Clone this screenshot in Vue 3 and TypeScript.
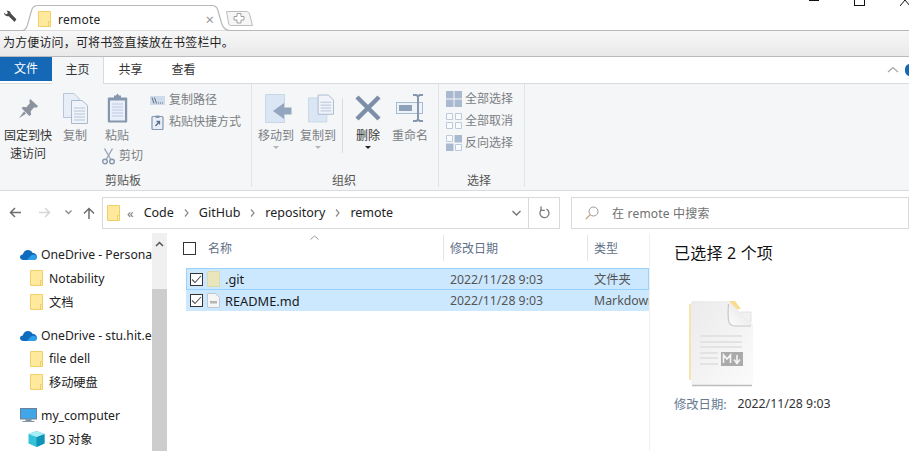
<template>
  <div class="window">
    <!-- 浏览器标签栏 -->
    <div class="tabstrip">
      <svg class="wrench" width="14" height="13" viewBox="0 0 14 13">
        <path d="M1 2.500 3 4.500 5 3 3.600.8C5.600.2 7.600 1.200 7.800 3.400L13.400 9.200 11.600 12 5.800 6.200C3.600 6.600.8 5 1 2.500Z" fill="#4a4a4a" />
      </svg>
      <div class="tab">
        <svg class="tab-shape" width="208" height="27" viewBox="0 0 208 27">
          <path d="M.5 26.500C3 26.500 4.500 24 5.500 21L9.500 6.500C10.500 3 13 1.500 16 1.500H190C193 1.500 195 3 196 6.500L199.500 19C201 24 203 26 207.500 26.500" fill="#fff" stroke="#b9b9b9" stroke-width="1.200" />
        </svg>
        <svg class="folder tab-folder" width="13" height="16" viewBox="0 0 13 16">
          <path d="M.5.500H12.500V15.500H.5Z" fill="#ffe99c" stroke="#f0cf6a" />
          <path d="M12.500 10.500H10.500V15.500" fill="none" stroke="#f0cf6a" />
        </svg>
        <span class="tab-title">remote</span>
        <span class="tab-close">×</span>
      </div>
      <svg class="newtab" width="27" height="16" viewBox="0 0 27 16">
        <path d="M.5 1.500H20C22 1.500 23 2.500 23.500 4L26.500 15.500H4.500C3.500 15.500 3 15 2.800 14.200Z" fill="#f6f6f6" stroke="#bdbdbd" />
        <path d="M11 3.500H15V6.500H18V10H15V13H11V10H8V6.500H11Z" fill="#fff" stroke="#a0a0a0" />
      </svg>
      <div class="winctl">
        <i class="win-min"></i>
        <i class="win-max"></i>
        <svg class="win-close" width="10" height="6" viewBox="0 0 10 6"><path d="M0 6 5 0 10 6" fill="none" stroke="#111" /></svg>
      </div>
    </div>

    <div class="bookmarkbar">为方便访问，可将书签直接放在书签栏中。</div>

    <!-- 功能区标签 -->
    <div class="ribbon-tabs">
      <div class="rtab file">文件</div>
      <div class="rtab active">主页</div>
      <div class="rtab">共享</div>
      <div class="rtab">查看</div>
      <div class="rtab-right">
        <svg width="12" height="7" viewBox="0 0 12 7"><path d="M1 6 6 1.500 11 6" fill="none" stroke="#a8a8a8" stroke-width="1.300" /></svg>
        <i class="help"></i>
      </div>
    </div>

    <!-- 功能区 -->
    <div class="ribbon">
      <section class="group g-clip">
        <div class="group-body">
          <div class="big b-pin">
            <div class="big-icon">
              <svg width="21" height="21" viewBox="0 0 24 24">
                <path d="M14 1 23 9.500 20.500 11 18.500 10.500 14.500 15 15 19 13 20.500 4 11.500 6 10 9.500 10.500 13.500 6 13 3Z" fill="#8a939e" />
                <path d="M7 15 1 23 9 18Z" fill="#8a939e" />
              </svg>
            </div>
            <span class="lbl dark">固定到快<br />速访问</span>
          </div>
          <div class="big b-copy">
            <div class="big-icon">
              <svg width="25" height="31" viewBox="0 0 25 31">
                <path d="M.5.500H11L16 5.500V24.500H.5Z" fill="#e8eef7" stroke="#b9c6d9" />
                <path d="M8.500 7.500H19L24.500 12.500V30.500H8.500Z" fill="#f0f4fa" stroke="#a9b9d0" />
                <path d="M11 15H22M11 18H22M11 21H22M11 24H22M11 27H22" stroke="#b4c2d6" />
              </svg>
            </div>
            <span class="lbl">复制</span>
          </div>
          <div class="big-col">
            <div class="big b-paste">
              <div class="big-icon">
                <svg width="21" height="30" viewBox="0 0 21 30">
                  <rect x=".8" y="4.500" width="19.400" height="25" rx="1" fill="#8596ad" />
                  <rect x="3" y="7.500" width="15" height="20" fill="#e9effa" />
                  <path d="M5 11H16M5 14H16M5 17H16M5 20H16M5 23H16" stroke="#bccadf" />
                  <path d="M7 4.500V2.500H9L10.500.5 12 2.500H14V6.500H7Z" fill="#8596ad" />
                </svg>
              </div>
              <span class="lbl">粘贴</span>
            </div>
            <div class="small s-cut">
              <svg width="13" height="17" viewBox="0 0 13 17">
                <path d="M2.500.500 8.500 11M10.500.500 4.500 11" stroke="#9da9ba" stroke-width="1.500" fill="none" />
                <circle cx="3" cy="13.500" r="2.300" fill="none" stroke="#8596ad" stroke-width="1.400" />
                <circle cx="10" cy="13.500" r="2.300" fill="none" stroke="#8596ad" stroke-width="1.400" />
              </svg>
              <span class="lbl">剪切</span>
            </div>
          </div>
          <div class="small-col">
            <div class="small">
              <svg width="15" height="9" viewBox="0 0 15 9">
                <rect width="15" height="9" fill="#cfdbea" />
                <path d="M2 1.500 4 7.500M4.500 1.500 6.500 7.500" stroke="#5c6f88" />
                <path d="M8 7H9M10 7H11M12 7H13" stroke="#5c6f88" />
              </svg>
              <span class="lbl">复制路径</span>
            </div>
            <div class="small">
              <svg width="15" height="15" viewBox="-1.500 0 15 15">
                <rect x=".5" y="1.500" width="11" height="13" rx="1" fill="#e9effa" stroke="#8596ad" stroke-width="1.200" />
                <path d="M4 .5H8V3H4Z" fill="#8596ad" />
                <path d="M4 11 8 6.500M5 6.500H8V9.500" stroke="#5c6f88" stroke-width="1.300" fill="none" />
              </svg>
              <span class="lbl">粘贴快捷方式</span>
            </div>
          </div>
        </div>
        <div class="group-name">剪贴板</div>
      </section>

      <section class="group g-org">
        <div class="group-body">
          <div class="big b-w42">
            <div class="big-icon shifted">
              <svg width="27" height="29" viewBox="0 0 27 29">
                <path d="M.5.500H19.500V28.500H.5Z" fill="#dbe6f4" stroke="#c8d6e8" />
                <path d="M19 9 8 17 19 25V20.500H26.500V13.500H19Z" fill="#93a5bf" />
              </svg>
            </div>
            <span class="lbl">移动到</span>
            <i class="caret"></i>
          </div>
          <div class="big b-w42">
            <div class="big-icon shifted">
              <svg width="26" height="29" viewBox="0 0 27 29">
                <path d="M.5 3.500H19.500V28.500H.5Z" fill="#dbe6f4" stroke="#c8d6e8" />
                <path d="M10.500.5H21L26.500 5.500V20.500H10.500Z" fill="#f0f4fa" stroke="#a9b9d0" />
                <path d="M13 8H24M13 11H24M13 14H24M13 17H24" stroke="#b4c2d6" />
              </svg>
            </div>
            <span class="lbl">复制到</span>
            <i class="caret"></i>
          </div>
          <div class="vsep"></div>
          <div class="big b-w42">
            <div class="big-icon">
              <svg width="26" height="26" viewBox="0 0 26 26">
                <path d="M2 2 24 24M24 2 2 24" stroke="#7d8ea8" stroke-width="4.500" />
              </svg>
            </div>
            <span class="lbl dark">删除</span>
            <i class="caret dark-caret"></i>
          </div>
          <div class="big b-w42">
            <div class="big-icon">
              <svg width="28" height="28" viewBox="0 0 28 28">
                <rect x=".5" y="8.500" width="26" height="11" fill="#eef3fa" stroke="#a9b9d0" />
                <rect x="3" y="11" width="13" height="6" fill="#8ea1bb" />
                <path d="M17 1H20.500L22 2.500 23.500 1H27M22 2.500V25.500M17 27H20.500L22 25.500 23.500 27H27" fill="none" stroke="#8596ad" stroke-width="2" />
              </svg>
            </div>
            <span class="lbl">重命名</span>
          </div>
        </div>
        <div class="group-name">组织</div>
      </section>

      <section class="group g-sel">
        <div class="sel-col">
          <div class="small">
            <svg width="16" height="16" viewBox="0 0 16 16">
              <path d="M0 0H7.500V7.500H0ZM8.500 0H16V7.500H8.500ZM0 8.500H7.500V16H0ZM8.500 8.500H16V16H8.500Z" fill="#a9b9d0" />
            </svg>
            <span class="lbl">全部选择</span>
          </div>
          <div class="small">
            <svg width="16" height="16" viewBox="0 0 16 16">
              <path d="M.5.500H6.500V6.500H.5ZM9.500.5H15.500V6.500H9.500ZM.5 9.500H6.500V15.500H.5ZM9.500 9.500H15.500V15.500H9.500Z" fill="#f8fafc" stroke="#bccadb" />
            </svg>
            <span class="lbl">全部取消</span>
          </div>
          <div class="small">
            <svg width="16" height="16" viewBox="0 0 16 16">
              <path d="M.5.500H6.500V6.500H.5ZM9.500 9.500H15.500V15.500H9.500Z" fill="#f8fafc" stroke="#bccadb" />
              <path d="M8.500 0H16V7.500H8.500ZM0 8.500H7.500V16H0Z" fill="#a9b9d0" />
            </svg>
            <span class="lbl">反向选择</span>
          </div>
        </div>
        <div class="group-name">选择</div>
      </section>
    </div>

    <!-- 地址栏 -->
    <div class="addressrow">
      <div class="navbtns">
        <svg width="12" height="11" viewBox="0 0 12 11"><path d="M12 5.500H1.500M6 1 1.500 5.500 6 10" fill="none" stroke="#6e6e6e" stroke-width="1.500" /></svg>
        <svg class="nb-fwd" width="12" height="11" viewBox="0 0 12 11"><path d="M0 5.500H10.500M6 1 10.500 5.500 6 10" fill="none" stroke="#d6d6d6" stroke-width="1.500" /></svg>
        <svg class="nb-down" width="7" height="5" viewBox="0 0 7 5"><path d="M.5.500 3.500 3.500 6.500.5" fill="none" stroke="#8a8a8a" stroke-width="1.300" /></svg>
        <svg class="nb-up" width="12" height="12" viewBox="0 0 12 12"><path d="M6 12V1.500M1 6.500 6 1.500 11 6.500" fill="none" stroke="#6e6e6e" stroke-width="1.500" /></svg>
      </div>
      <div class="addressbox">
        <svg class="folder" width="13" height="16" viewBox="0 0 13 16">
          <path d="M.5.500H12.500V15.500H.5Z" fill="#ffe99c" stroke="#f0cf6a" />
          <path d="M12.500 10.500H10.500V15.500" fill="none" stroke="#f0cf6a" />
        </svg>
        <span class="crumb-more">«</span>
        <template v-for="(c, i) in crumbs" :key="c">
          <span class="crumb">{{ c }}</span>
          <svg v-if="i < crumbs.length - 1" width="5" height="8" viewBox="0 0 5 8"><path d="M1 .5 4 4 1 7.500" fill="none" stroke="#8a8a8a" stroke-width="1.200" /></svg>
        </template>
        <div class="addr-end">
          <svg width="9" height="6" viewBox="0 0 9 6"><path d="M.5 1 4.500 5 8.500 1" fill="none" stroke="#7a7a7a" stroke-width="1.500" /></svg>
        </div>
        <div class="addr-refresh">
          <svg width="11" height="13" viewBox="0 0 11 13"><path d="M7.500 3.200A4.500 4.500 0 1 1 2.500 3.800M2 .5V4.300H5.800" fill="none" stroke="#7a7a7a" stroke-width="1.300" /></svg>
        </div>
      </div>
      <div class="searchbox">
        <svg width="14" height="14" viewBox="0 0 14 14"><circle cx="8.500" cy="5.500" r="4.500" fill="none" stroke="#9a9a9a" /><path d="M5.300 8.700.8 13.200" stroke="#c79a6a" stroke-width="1.200" /></svg>
        <span>在 remote 中搜索</span>
      </div>
    </div>

    <!-- 主区域 -->
    <div class="main">
      <nav class="sidebar">
        <div v-for="item in navItems" :key="item.label" class="nav-row" :class="[item.kind, { spaced: item.spaced }]">
          <svg v-if="item.kind === 'cloud'" width="17" height="11" viewBox="0 0 17 11">
            <path d="M3.500 11C1.500 11 0 9.800 0 8.200 0 6.600 1.300 5.500 2.800 5.500 3.300 3 5.400 1 8 1 10 1 11.500 2 12.400 3.700 14.800 3.800 17 5.500 17 7.800 17 9.700 15.500 11 13.500 11Z" fill="#0f6cbd" />
            <path d="M7 11 11 6.500C12.800 4.700 17 6 17 8.500 17 10 15.500 11 13.800 11Z" fill="#2c9fe8" />
          </svg>
          <svg v-else-if="item.kind === 'folder'" width="13" height="16" viewBox="0 0 13 16">
            <path d="M.5.500H12.500V15.500H.5Z" fill="#ffe99c" stroke="#f0cf6a" />
            <path d="M12.500 10.500H10.500V15.500" fill="none" stroke="#f0cf6a" />
          </svg>
          <svg v-else-if="item.kind === 'pc'" width="17" height="15" viewBox="0 0 17 15">
            <rect x=".5" y=".5" width="16" height="10.500" fill="#3fa6e8" stroke="#6b8296" />
            <path d="M6 11H11V13H6ZM2.500 13.500H14.500" stroke="#8195a7" fill="#8195a7" />
          </svg>
          <svg v-else width="17" height="16" viewBox="0 0 17 16">
            <path d="M8.500 0 16.500 3V12.500L8.500 16 .5 12.500V3Z" fill="#35c1d8" />
            <path d="M8.500 6 16.500 3V12.500L8.500 16Z" fill="#0f93b8" />
            <path d="M8.500 0 16.500 3 8.500 6 .5 3Z" fill="#a9eef5" />
          </svg>
          <span>{{ item.label }}</span>
        </div>
      </nav>
      <div class="scrollbar">
        <svg width="9" height="6" viewBox="0 0 9 6"><path d="M1 5 4.500 1.500 8 5" fill="none" stroke="#555" stroke-width="1.500" /></svg>
        <div class="thumb"></div>
      </div>

      <div class="filelist">
        <div class="list-head">
          <svg class="sort" width="9" height="5" viewBox="0 0 9 5"><path d="M.5 4.500 4.500 1 8.500 4.500" fill="none" stroke="#9a9a9a" /></svg>
          <i class="check head-check"></i>
          <span class="col-name">名称</span>
          <span class="col col-date">修改日期</span>
          <span class="col col-type">类型</span>
        </div>
        <div v-for="f in files" :key="f.name" class="file-row" :class="{ focused: f.focused }">
          <i class="check on">
            <svg width="11" height="9" viewBox="0 0 11 9"><path d="M1 4.500 4 7.500 10 1" fill="none" stroke="#555" stroke-width="1.100" /></svg>
          </i>
          <svg v-if="f.focused" class="file-ic" width="13" height="16" viewBox="0 0 13 16">
            <path d="M.5.500H12.500V15.500H.5Z" fill="#e9e6bd" stroke="#dcd9ac" />
          </svg>
          <svg v-else class="file-ic" width="13" height="15" viewBox="0 0 13 15">
            <path d="M.5.500H8.500L12.500 4.500V14.500H.5Z" fill="#f5f5f5" stroke="#bfc6d0" />
            <path d="M3 8H10V10.500H3Z" fill="#b5b5b5" />
          </svg>
          <span class="f-name">{{ f.name }}</span>
          <span class="f-date">{{ f.date }}</span>
          <span class="f-type">{{ f.type }}</span>
        </div>
      </div>

      <aside class="preview">
        <div class="pv-title">已选择 2 个项</div>
        <svg class="pv-icon" width="66" height="87" viewBox="0 0 66 87">
          <defs>
            <linearGradient id="pg" x1="0" y1="0" x2="1" y2="1">
              <stop offset="0" stop-color="#ebebeb" />
              <stop offset="1" stop-color="#fbfbfb" />
            </linearGradient>
            <linearGradient id="pf" x1="0" y1="1" x2="1" y2="0">
              <stop offset="0" stop-color="#fdfdfd" />
              <stop offset="1" stop-color="#dedede" />
            </linearGradient>
          </defs>
          <path d="M0 4H4V80H0Z" fill="#f6e3b0" />
          <path d="M2 3C2 2 3 1 4 1H41L64 25V83C64 84 63 85 62 85H4C3 85 2 84 2 83Z" fill="url(#pg)" />
          <path d="M41 1H46L52 9H41Z" fill="#f9dc8e" />
          <path d="M52 12H62V22H52Z" fill="#f1f1f1" stroke="#e2e2e2" />
          <path d="M3 85.500H63" stroke="#bcbcbc" stroke-width="1.500" />
          <path d="M40 1C39.500 10 39.500 16 40 20 40.500 23.500 42 25 46 25H64Z" fill="url(#pf)" />
          <path d="M39.500 4C39 10 39 16 39.500 20 40 24.500 42 26 46 26H62" fill="none" stroke="#c8c8c8" stroke-width="1.200" />
          <path d="M11 36H53M11 42H53M11 47H53M11 53H29M11 58H29M11 64H29" stroke="#e3e3e3" stroke-width="2" />
          <rect x="32" y="52" width="22" height="14" fill="#aaaaaa" />
          <path d="M34.500 63V55L38 59 41.500 55V63M48 55V62.500M45 59.500 48 63.500 51 59.500" fill="none" stroke="#f5f5f5" stroke-width="1.600" />
        </svg>
        <div class="pv-meta"><span class="pv-key">修改日期:</span><span>2022/11/28 9:03</span></div>
      </aside>
    </div>
  </div>
</template>

<script setup lang="ts">
interface NavItem {
  label: string
  kind: 'cloud' | 'folder' | 'pc' | 'cube'
  spaced?: boolean
}

interface FileRow {
  name: string
  date: string
  type: string
  focused: boolean
}

const crumbs = ['Code', 'GitHub', 'repository', 'remote']

const navItems: NavItem[] = [
  { label: 'OneDrive - Personal', kind: 'cloud' },
  { label: 'Notability', kind: 'folder' },
  { label: '文档', kind: 'folder' },
  { label: 'OneDrive - stu.hit.edu.cn', kind: 'cloud', spaced: true },
  { label: 'file dell', kind: 'folder' },
  { label: '移动硬盘', kind: 'folder' },
  { label: 'my_computer', kind: 'pc', spaced: true },
  { label: '3D 对象', kind: 'cube' },
]

const files: FileRow[] = [
  { name: '.git', date: '2022/11/28 9:03', type: '文件夹', focused: true },
  { name: 'README.md', date: '2022/11/28 9:03', type: 'Markdown File', focused: false },
]
</script>

<style>
html,
body {
  margin: 0;
  background: #fff;
  overflow: hidden;
}
</style>

<style scoped>
.window {
  width: 909px;
  height: 451px;
  overflow: hidden;
  display: flex;
  flex-direction: column;
  font-family: "Noto Sans", "Noto Sans CJK SC", sans-serif;
  font-size: 12px;
  color: #1a1a1a;
  background: #fff;
}

svg {
  flex: none;
  display: block;
}

/* tab strip */
.tabstrip {
  height: 31px;
  flex: none;
  display: flex;
  align-items: flex-end;
  box-sizing: border-box;
  border-bottom: 1px solid #b8b8b8;
}

.wrench {
  margin: 0 0 7px 3px;
}

.tab {
  position: relative;
  width: 208px;
  height: 27px;
  box-sizing: border-box;
  padding-top: 3px;
  margin-left: 5px;
  margin-bottom: -1px;
  display: flex;
  align-items: center;
  flex: none;
}

.tab-shape {
  position: absolute;
  left: 0;
  top: 0;
}

.tab-folder,
.tab-title,
.tab-close {
  position: relative;
}

.tab-folder {
  margin-left: 16px;
}

.tab-title {
  margin-left: 7px;
  font-size: 12px;
  color: #222;
  letter-spacing: 0.25px;
}

.tab-close {
  margin-left: auto;
  margin-right: 16px;
  font-size: 15px;
  color: #999;
  line-height: 1;
}

.newtab {
  margin: 0 0 4px -4px;
}

.winctl {
  margin-left: auto;
  align-self: flex-start;
  display: flex;
  align-items: flex-start;
}

.win-min {
  width: 10px;
  height: 1px;
  background: #111;
  margin-right: 35px;
}

.win-max {
  width: 9px;
  height: 5px;
  border: 1px solid #111;
  border-top: 0;
  margin-right: 35px;
}

.win-close {
  margin-right: -1px;
}

/* bookmark bar */
.bookmarkbar {
  height: 26px;
  flex: none;
  box-sizing: border-box;
  padding-left: 3px;
  line-height: 24px;
  font-size: 12px;
  letter-spacing: 0.15px;
  color: #222;
  background: linear-gradient(#f7f7f7, #e9e9e9);
  border-bottom: 1px solid #b9b9be;
}

/* ribbon tabs */
.ribbon-tabs {
  height: 27px;
  flex: none;
  display: flex;
  box-sizing: border-box;
  border-bottom: 1px solid #dadbdc;
}

.rtab {
  width: 53px;
  text-align: center;
  line-height: 26px;
  font-size: 12px;
  color: #333;
  box-sizing: border-box;
}

.rtab.file {
  width: 52px;
  height: 24px;
  line-height: 23px;
  background: #1568b5;
  color: #fff;
}

.rtab.active {
  width: 52px;
  height: 27px;
  background: #f5f6f7;
  border-right: 1px solid #dadbdc;
}

.rtab-right {
  margin-left: auto;
  display: flex;
  align-items: center;
  gap: 6px;
  height: 25px;
}

.help {
  width: 10px;
  height: 12px;
  border-radius: 6px;
  background: #1568b5;
  margin-right: -6px;
}

/* ribbon */
.ribbon {
  height: 107px;
  flex: none;
  box-sizing: border-box;
  display: flex;
  background: #f5f6f7;
  border-bottom: 1px solid #dadbdc;
}

.group {
  display: flex;
  flex-direction: column;
  flex: none;
  border-right: 1px solid #e2e3e4;
  box-sizing: border-box;
  padding-top: 5px;
  margin-bottom: 3px;
}

.g-clip {
  width: 252px;
}

.g-org {
  width: 187px;
  padding-left: 3px;
}

.g-sel {
  width: 86px;
  padding-left: 7px;
  padding-top: 4px;
}

.group-body {
  flex: 1;
  display: flex;
  align-items: flex-start;
}

.group-name {
  height: 16px;
  line-height: 19px;
  padding-right: 5px;
  text-align: center;
  font-size: 12px;
  color: #555;
}

.g-sel .group-name {
  padding-right: 12px;
}

.lbl {
  font-size: 12px;
  color: #7b7f85;
  line-height: 18px;
  white-space: nowrap;
}

.lbl.dark {
  color: #333;
}

.big {
  display: flex;
  flex-direction: column;
  align-items: center;
  text-align: center;
  flex: none;
}

.big-icon {
  height: 38px;
  display: flex;
  align-items: center;
  justify-content: center;
}

.big-icon.shifted {
  padding-left: 5px;
}

.b-pin {
  width: 56px;
}

.b-copy {
  width: 38px;
}

.big-col {
  width: 44px;
  margin-left: 1px;
}

.b-paste {
  width: 30px;
  margin-left: 7px;
}

.b-w42 {
  width: 42px;
}

.s-cut {
  margin-left: 7px;
}

.small {
  display: flex;
  align-items: center;
  gap: 4px;
  height: 22px;
}

.small-col {
  margin-left: 11px;
  display: flex;
  flex-direction: column;
}

.g-sel .small {
  gap: 3px;
}

.caret {
  width: 0;
  height: 0;
  border: 3px solid transparent;
  border-top: 3px solid #b5b5b5;
  margin-top: 1px;
}

.dark-caret {
  border-top-color: #222;
}

.vsep {
  width: 1px;
  height: 55px;
  background: #dcdddf;
  margin: 9px 4px 0 3px;
  flex: none;
}

.sel-col {
  flex: 1;
  display: flex;
  flex-direction: column;
}

/* address row */
.addressrow {
  height: 42px;
  flex: none;
  display: flex;
  align-items: center;
  box-sizing: border-box;
  padding-top: 1px;
}

.navbtns {
  width: 102px;
  flex: none;
  display: flex;
  align-items: center;
  padding-left: 9px;
  box-sizing: border-box;
}

.nb-fwd {
  margin-left: 18px;
}

.nb-down {
  margin-left: 14px;
}

.nb-up {
  margin-left: 11px;
}

.addressbox {
  width: 458px;
  height: 32px;
  flex: none;
  box-sizing: border-box;
  border: 1px solid #d9d9d9;
  display: flex;
  align-items: center;
  gap: 10px;
  padding-left: 4px;
  font-size: 12.500px;
  color: #222;
}

.crumb-more {
  color: #777;
  font-size: 13px;
  margin-left: -3px;
  margin-right: -1px;
  letter-spacing: 1px;
}

.addr-end {
  margin-left: auto;
  width: 24px;
  display: flex;
  justify-content: center;
}

.addr-refresh {
  width: 31px;
  height: 30px;
  margin-left: -10px;
  border-left: 1px solid #d9d9d9;
  box-sizing: border-box;
  display: flex;
  align-items: center;
  justify-content: center;
}

.searchbox {
  margin-left: 11px;
  flex: 1;
  height: 32px;
  box-sizing: border-box;
  border: 1px solid #d9d9d9;
  display: flex;
  align-items: center;
  gap: 13px;
  padding-left: 13px;
  color: #707070;
  font-size: 12px;
  letter-spacing: 0.2px;
}

/* main */
.main {
  flex: 1;
  min-height: 0;
  display: flex;
}

.sidebar {
  width: 152px;
  flex: none;
  overflow: hidden;
  padding: 10px 0 0 20px;
  box-sizing: border-box;
}

.nav-row {
  height: 23.600px;
  display: flex;
  align-items: center;
  gap: 4px;
  white-space: nowrap;
  font-size: 12.200px;
  color: #222;
}

.nav-row.folder {
  padding-left: 10px;
  gap: 6px;
}

.nav-row.cube {
  padding-left: 8px;
  gap: 4px;
}

.nav-row.spaced {
  margin-top: 9.600px;
}

.scrollbar {
  width: 15px;
  flex: none;
  background: #f0f0f0;
  display: flex;
  flex-direction: column;
  align-items: center;
  padding-top: 8px;
  box-sizing: border-box;
}

.thumb {
  width: 15px;
  flex: 1;
  margin-top: 42px;
  background: #cdcdcd;
}

.filelist {
  width: 483px;
  flex: none;
  padding-left: 3px;
  box-sizing: border-box;
  border-right: 1px solid #f0f0f0;
  overflow: hidden;
}

.list-head {
  position: relative;
  height: 35px;
  display: flex;
  align-items: flex-start;
  padding-top: 2px;
  box-sizing: border-box;
  color: #5f7088;
  font-size: 12px;
}

.sort {
  position: absolute;
  left: 140px;
  top: 2px;
}

.check {
  width: 13px;
  height: 13px;
  flex: none;
  box-sizing: border-box;
  border: 1px solid #333;
  display: flex;
  align-items: center;
  justify-content: center;
  background: #fff;
}

.head-check {
  margin-left: 13px;
  margin-top: 7px;
}

.col-name {
  margin-left: 12px;
  width: 235px;
  flex: none;
  line-height: 28px;
}

.col {
  height: 26px;
  line-height: 28px;
  border-left: 1px solid #e5e5e5;
  padding-left: 6px;
  box-sizing: border-box;
  flex: none;
}

.col-date {
  width: 144px;
}

.col-type {
  width: 60px;
}

.file-row {
  margin-left: 16px;
  width: 463px;
  height: 21px;
  box-sizing: border-box;
  background: #cce8ff;
  display: flex;
  align-items: center;
  white-space: nowrap;
  overflow: hidden;
  font-size: 12.800px;
  padding-left: 4px;
}

.file-row.focused {
  height: 22px;
  border: 1px solid #99d1ff;
  padding-left: 3px;
}

.file-ic {
  margin-left: 4px;
}

.f-name {
  margin-left: 5px;
  width: 225px;
  flex: none;
  color: #1a1a1a;
}

.f-date {
  width: 144px;
  flex: none;
  font-size: 12.300px;
  color: #555;
}

.f-type {
  flex: none;
  font-size: 12.300px;
  color: #555;
}

.preview {
  flex: 1;
  padding: 10px 0 0 24px;
  box-sizing: border-box;
}

.pv-title {
  font-size: 16px;
  line-height: 20px;
  letter-spacing: 0.2px;
  color: #111;
}

.pv-icon {
  margin: 37px 0 0 15px;
}

.pv-meta {
  display: flex;
  gap: 11px;
  font-size: 12.300px;
  color: #333;
  margin-top: 8px;
}

.pv-key {
  color: #667a93;
}
</style>
